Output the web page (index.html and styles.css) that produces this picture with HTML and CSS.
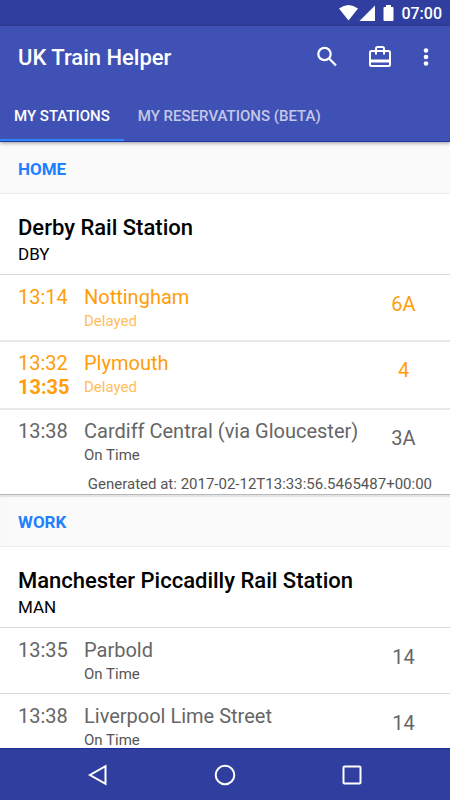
FILE: index.html
```html
<!DOCTYPE html>
<html lang="en">
<head>
<meta charset="utf-8">
<meta name="viewport" content="width=device-width, initial-scale=1">
<title>UK Train Helper</title>
<link rel="stylesheet" href="styles.css">
</head>
<body>
<div class="screen">
  <div class="status-bar">
    <svg class="status-icons" width="58" height="18" viewBox="0 0 58 18" fill="#fff" aria-hidden="true">
      <path d="M1 4.500Q10.500-2.500 20 4.500L10.500 16.500Z"/>
      <path d="M37 1.500V17H21.500Z"/>
      <path d="M48 1h5v2h1.500a1 1 0 0 1 1 1v12a1 1 0 0 1-1 1h-8a1 1 0 0 1-1-1V4a1 1 0 0 1 1-1H48Z"/>
    </svg>
    <time>07:00</time>
  </div>
  <header class="app-bar">
    <div class="toolbar">
      <h1>UK Train Helper</h1>
      <button type="button" aria-label="Search">
        <svg width="26" height="26" viewBox="0 0 26 26" fill="none" stroke="#fff" stroke-width="2.200"><circle cx="10.500" cy="9" r="6.200"/><path d="M14.800 13.300L22 20.500"/></svg>
      </button>
      <button type="button" aria-label="Trips">
        <svg width="26" height="26" viewBox="0 0 26 26" fill="none" stroke="#fff" stroke-width="2"><rect x="3" y="6" width="20" height="15" rx="1.500"/><path d="M3 16H23" stroke-width="3"/><path d="M9 9.500V3.500Q9 2 10.500 2h5Q17 2 17 3.500V9.500"/></svg>
      </button>
      <button type="button" class="more" aria-label="More options">
        <svg width="6" height="26" viewBox="0 0 6 26" fill="#fff"><circle cx="3" cy="5.500" r="2.300"/><circle cx="3" cy="12" r="2.300"/><circle cx="3" cy="18.500" r="2.300"/></svg>
      </button>
    </div>
    <nav class="tabs">
      <a href="#stations" class="tab active" aria-current="page">My stations</a>
      <a href="#reservations" class="tab">My reservations (beta)</a>
    </nav>
  </header>
  <main class="content" id="stations">
    <section class="card">
      <h2 class="group">HOME</h2>
      <div class="station"><h3>Derby Rail Station</h3><p>DBY</p></div>
      <ul>
        <li class="train late"><div class="times"><time>13:14</time></div><div class="info"><span class="place">Nottingham</span><span class="state">Delayed</span></div><span class="platform">6A</span></li>
        <li class="train late"><div class="times"><time>13:32</time><time class="expected">13:35</time></div><div class="info"><span class="place">Plymouth</span><span class="state">Delayed</span></div><span class="platform">4</span></li>
        <li class="train"><div class="times"><time>13:38</time></div><div class="info"><span class="place">Cardiff Central (via Gloucester)</span><span class="state">On Time</span></div><span class="platform">3A</span></li>
      </ul>
      <p class="generated">Generated at: 2017-02-12T13:33:56.5465487+00:00</p>
    </section>
    <section class="card">
      <h2 class="group">WORK</h2>
      <div class="station"><h3>Manchester Piccadilly Rail Station</h3><p>MAN</p></div>
      <ul>
        <li class="train"><div class="times"><time>13:35</time></div><div class="info"><span class="place">Parbold</span><span class="state">On Time</span></div><span class="platform">14</span></li>
        <li class="train"><div class="times"><time>13:38</time></div><div class="info"><span class="place">Liverpool Lime Street</span><span class="state">On Time</span></div><span class="platform">14</span></li>
      </ul>
    </section>
  </main>
  <nav class="system-nav" aria-label="System">
    <button type="button" aria-label="Back"><svg width="24" height="24" viewBox="0 0 24 24"><path d="M19.500 3.200V20.800L4 12Z"/></svg></button>
    <button type="button" aria-label="Home"><svg width="24" height="24" viewBox="0 0 24 24"><circle cx="12" cy="12" r="9.300"/></svg></button>
    <button type="button" aria-label="Recent apps"><svg width="24" height="24" viewBox="0 0 24 24"><rect x="3.500" y="3.500" width="17" height="17" rx="1"/></svg></button>
  </nav>
</div>
</body>
</html>
```
FILE: styles.css
```css
* { box-sizing: border-box; }

body, h1, h2, h3, p, ul { margin: 0; padding: 0; }

body { font-family: Roboto, sans-serif; color: #000; background: #fff; }

ul { list-style: none; }

button {
  display: flex;
  align-items: center;
  justify-content: center;
  padding: 0;
  border: 0;
  background: none;
}

.screen { display: flex; flex-direction: column; height: 100vh; }

.status-bar {
  display: flex;
  flex: none;
  align-items: center;
  justify-content: flex-end;
  gap: 5px;
  height: 26px;
  padding-right: 8px;
  background: #303f9f;
  color: #fff;
  font-size: 16px;
  font-weight: 500;
}

.app-bar {
  position: relative;
  flex: none;
  background: #3f51b5;
  border-bottom: 1px solid #2338a0;
  box-shadow: 0 1px 4px rgba(0, 0, 0, 0.4);
}

.toolbar {
  display: flex;
  align-items: center;
  height: 62px;
  padding: 2px 18px 0;
}

.toolbar h1 {
  flex: 1;
  color: #fff;
  font-size: 22px;
  font-weight: 500;
  line-height: 28px;
}

.toolbar button { width: 53px; height: 48px; }

.toolbar .more { width: 20px; margin-left: 10px; margin-right: -4px; }

.tabs { display: flex; height: 53px; }

.tab {
  display: flex;
  align-items: center;
  padding: 4px 14px 0;
  border-bottom: 2px solid transparent;
  color: rgba(255, 255, 255, 0.7);
  font-size: 15px;
  font-weight: 500;
  text-decoration: none;
  text-transform: uppercase;
}

.tab.active { color: #fff; border-color: #2f86ff; }

.content { flex: 1; min-height: 0; overflow: hidden; }

.card { border-bottom: 1px solid #b8b8b8; }

.group {
  height: 52px;
  padding: 0 18px;
  border-bottom: 1px solid #ebebeb;
  background: #fafafa;
  color: #2080ff;
  font-size: 17px;
  font-weight: 700;
  line-height: 54px;
}

.card + .card .group { box-shadow: inset 0 2px 1px #e4e4e4; }

.station { padding: 20px 18px 8px; }

.station h3 { font-size: 22px; font-weight: 500; line-height: 28px; }

.station p { font-size: 17px; line-height: 24px; }

.train {
  display: flex;
  min-height: 66px;
  padding: 10px 18px 7px;
  border-top: 1px solid #d8d8d8;
  color: #666;
  font-size: 20px;
  line-height: 24px;
}

.late + .train { padding-top: 9px; border-top: 2px solid #e8e8e8; }

.times { display: flex; flex-direction: column; width: 66px; }

.expected { padding-bottom: 2px; font-weight: 700; }

.info { display: flex; flex: 1; flex-direction: column; }

.state { color: #555; font-size: 15px; }

.platform { width: 57px; padding-top: 7px; text-align: center; }

.late { color: #ff9d0a; }

.late .state { color: #ffbe5c; }

.generated {
  padding: 0 18px;
  color: #555;
  font-size: 15px;
  line-height: 20px;
  text-align: right;
}

.system-nav {
  display: flex;
  flex: none;
  justify-content: center;
  gap: 39px;
  height: 52px;
  border-top: 1px solid #1c2f96;
  background: #303f9f;
}

.system-nav button { width: 88px; }

.system-nav svg { fill: none; stroke: #fff; stroke-width: 2; }
```
